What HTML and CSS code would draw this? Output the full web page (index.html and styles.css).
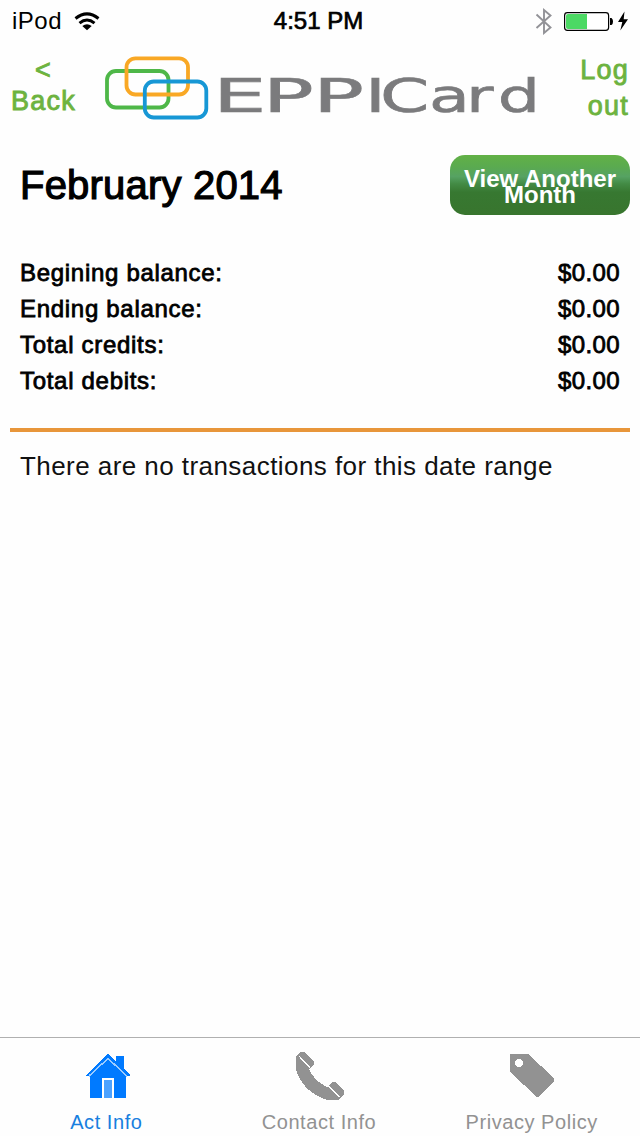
FILE: index.html
```html
<!DOCTYPE html>
<html lang="en">
<head>
<meta charset="utf-8">
<title>EPPICard</title>
<link rel="stylesheet" href="styles.css">
</head>
<body>
<div class="status">
  <div class="carrier"><span>iPod</span>
    <svg width="26" height="20" viewBox="74 10 26 20" fill="none" stroke="#000" stroke-width="3"><path d="M75.500 17.500Q87 8.300 98.500 17.500M79.500 22.100Q87 16 94.500 22.100"/><path d="M82.300 25Q87 21.400 91.700 25L87 29.300Z" fill="#000" stroke="none"/></svg>
  </div>
  <div class="clock">4:51 PM</div>
  <div class="power">
    <svg width="96" height="28" viewBox="534 6 96 28"><path d="M536.500 13.500L550.500 26.500L544 32V9L550.500 14.500L536.500 27" fill="none" stroke="#929297" stroke-width="1.900"/><rect x="564.600" y="11.600" width="44" height="17.800" rx="2.800" fill="#fff" stroke="#000" stroke-width="1.200"/><path d="M566 15q0-2 2-2h19v15h-19q-2 0-2-2z" fill="#4cd964"/><path d="M610 17h1.500q1.500 1 1.500 3.500t-1.500 3.500H610z"/><path d="M624.500 10.500L618 21h4.300l-2 8.500L628 18.300h-4.300z"/></svg>
  </div>
</div>
<header class="header">
  <a class="back"><span>&lt;</span><span>Back</span></a>
  <svg class="logo" width="440" height="70" viewBox="103 54 440 70">
    <g fill="none" stroke-width="3.800">
      <rect x="107" y="71" width="61.500" height="36.500" rx="9" stroke="#4eb748"/>
      <rect x="126.500" y="58.300" width="61.500" height="36.200" rx="9" stroke="#f9a825"/>
      <rect x="144.800" y="81.500" width="61.500" height="36" rx="9" stroke="#1797d5"/>
    </g>
    <g class="wordmark">
      <text transform="translate(213 112) scale(1.8 1)" x="0 27.700 55.500">EPP</text>
      <text transform="translate(365 112) scale(1.5 1)" x="0 10">IC</text>
      <text transform="translate(429 112) scale(1.42 1)" x="0 26 48.500">ard</text>
    </g>
  </svg>
  <a class="logout"><span>Log</span><span>out</span></a>
</header>
<main class="main">
  <div class="title"><h1>February 2014</h1><button class="month">View Another<br>Month</button></div>
  <dl class="summary">
    <div class="row"><dt>Begining balance:</dt><dd>$0.00</dd></div>
    <div class="row"><dt>Ending balance:</dt><dd>$0.00</dd></div>
    <div class="row"><dt>Total credits:</dt><dd>$0.00</dd></div>
    <div class="row"><dt>Total debits:</dt><dd>$0.00</dd></div>
  </dl>
  <p class="empty">There are no transactions for this date range</p>
</main>
<nav class="tabs">
  <a class="tab active">
    <svg class="house" width="48" height="50" viewBox="84 1051 48 50" shape-rendering="crispEdges"><path d="M108 1054L116 1061V1056H124V1068L130 1075V1076H126V1098H90V1076H86V1075Z" fill="#007aff"/><path d="M89 1076L108 1058.500L127 1076" fill="none" stroke="#9cccff" stroke-width="1.500"/><path d="M103 1098V1079H113V1098" fill="#4ca2ff" stroke="#fff" stroke-width="2"/></svg>
    <span>Act Info</span>
  </a>
  <a class="tab">
    <svg width="50" height="50" viewBox="294 1051 50 50" shape-rendering="crispEdges"><path d="M296 1057L300 1052H305L314 1062V1065L309 1069Q314 1081 327 1087L332 1082H335L344 1091V1094L339 1100H327Q303 1092 296 1070Z" fill="#929292"/><path d="M299 1056L310 1067.500M328 1086L340 1097" stroke="#fff" stroke-width="1.300"/></svg>
    <span>Contact Info</span>
  </a>
  <a class="tab">
    <svg width="48" height="50" viewBox="508 1051 48 50" shape-rendering="crispEdges"><path d="M510 1054H528L554 1078V1081L539 1097H537L510 1072Z" fill="#929292"/><circle cx="519" cy="1063" r="4.200" fill="#fff"/></svg>
    <span>Privacy Policy</span>
  </a>
</nav>
</body>
</html>
```
FILE: styles.css
```css
* { box-sizing: border-box; }
body {
  margin: 0;
  width: 640px;
  height: 1136px;
  display: flex;
  flex-direction: column;
  background: #fefefe;
  color: #000;
  font-family: "Liberation Sans", Arial, sans-serif;
  overflow: hidden;
}
svg { display: block; flex: none; }
h1, p, dl, dd { margin: 0; }
.status {
  height: 40px;
  padding: 0 10px 0 12px;
  display: grid;
  grid-template-columns: 1fr auto 1fr;
  align-items: center;
  font-size: 24px;
  line-height: 40px;
}
.carrier { display: flex; align-items: center; gap: 12px; letter-spacing: .5px; padding-top: 1px; }
.clock { padding: 1px 5px 0 0; -webkit-text-stroke: .7px #000; }
.power { justify-self: end; }
.header {
  height: 100px;
  padding: 0 11px 0 10px;
  display: flex;
  justify-content: space-between;
}
.back, .logout {
  display: flex;
  flex-direction: column;
  color: #6db33f;
  font-size: 27px;
  letter-spacing: 1.200px;
  -webkit-text-stroke: .9px #6db33f;
}
.back { width: 67px; padding-top: 15px; align-items: center; line-height: 31px; }
.logout { width: 67px; padding-top: 12px; align-items: flex-end; line-height: 36px; }
.logo { margin: 14px auto 0 26px; }
.wordmark {
  font-family: "DejaVu Sans", sans-serif;
  font-size: 47px;
  fill: #7b7b7d;
  stroke: #7b7b7d;
  stroke-width: .6px;
}
.main { flex: 1; padding: 15px 10px 0; }
.title {
  height: 60px;
  padding-left: 10px;
  display: flex;
  justify-content: space-between;
}
.title h1 {
  font-size: 40px;
  font-weight: 400;
  line-height: 60px;
  letter-spacing: .2px;
  -webkit-text-stroke: 1.200px #000;
}
.month {
  width: 180px;
  height: 60px;
  padding: 3px 0 0;
  border: 0;
  border-radius: 15px;
  background: linear-gradient(#62b146 0, #5aaa50 20%, #56a263 36%, #438b45 48%, #377831 62%, #38752e 100%);
  color: #fff;
  font: bold 24px/16px "Liberation Sans", Arial, sans-serif;
}
.summary {
  height: 217px;
  padding: 40px 10px 0;
  border-bottom: 4px solid #e8963a;
  font-size: 24px;
  line-height: 36px;
  letter-spacing: .7px;
  -webkit-text-stroke: .8px #000;
}
.row { display: flex; justify-content: space-between; }
.row dd { letter-spacing: .4px; }
.empty {
  padding: 16px 10px 0;
  font-size: 26px;
  line-height: 36px;
  letter-spacing: .44px;
  color: #111;
}
.tabs {
  height: 99px;
  padding: 13px 2px 0 0;
  border-top: 1px solid #b0b0b0;
  display: grid;
  grid-template-columns: repeat(3, 1fr);
}
.tab {
  display: flex;
  flex-direction: column;
  align-items: center;
  color: #929292;
  font-size: 20px;
  line-height: 24px;
  letter-spacing: .55px;
}
.house { margin-left: 4px; }
.tab span { margin-top: 9px; }
.tab.active { color: #187fdf; }
```
